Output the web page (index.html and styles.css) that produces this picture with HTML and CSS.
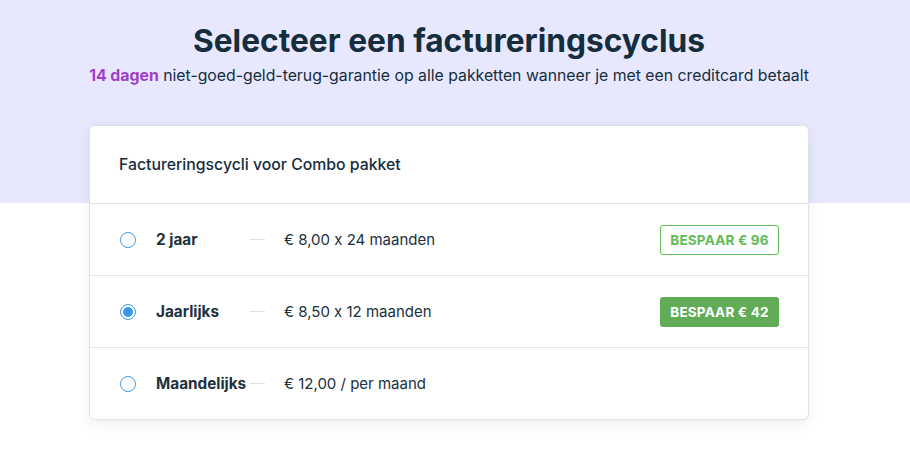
FILE: index.html
```html
<!DOCTYPE html>
<html lang="nl">
<head>
<meta charset="utf-8">
<link rel="stylesheet" href="styles.css">
</head>
<body>
<main class="page">
  <header class="hero">
    <h1 class="title">Selecteer een factureringscyclus</h1>
    <p class="subtitle"><span class="accent">14 dagen</span> niet-goed-geld-terug-garantie op alle pakketten wanneer je met een creditcard betaalt</p>
  </header>
  <section class="card">
    <div class="card-head">Factureringscycli voor Combo pakket</div>
    <div class="row">
      <span class="radio"></span>
      <span class="label">2 jaar</span>
      <span class="dash"></span>
      <span class="price">€ 8,00 x 24 maanden</span>
      <span class="badge badge-outline">BESPAAR € 96</span>
    </div>
    <div class="row">
      <span class="radio radio-on"></span>
      <span class="label">Jaarlijks</span>
      <span class="dash"></span>
      <span class="price">€ 8,50 x 12 maanden</span>
      <span class="badge badge-solid">BESPAAR € 42</span>
    </div>
    <div class="row">
      <span class="radio"></span>
      <span class="label">Maandelijks</span>
      <span class="dash"></span>
      <span class="price">€ 12,00 / per maand</span>
    </div>
  </section>
</main>
</body>
</html>
```
FILE: styles.css
```css
* { box-sizing: border-box; }
html, body { margin: 0; padding: 0; }
body {
  font-family: "Inter", "Noto Sans", sans-serif;
  font-feature-settings: "calt" 0;
  color: #162d3d;
  background: linear-gradient(to bottom, #e7e8fe 0, #e7e8fe 203px, #ffffff 203px);
  min-height: 452px;
}
.page {
  display: flex;
  flex-direction: column;
  align-items: center;
  padding-right: 12px;
}
.hero {
  display: flex;
  flex-direction: column;
  align-items: center;
  padding-top: 20px;
}
.title {
  margin: 0;
  font-size: 31.7px;
  font-weight: 700;
  line-height: 42px;
  color: #162d3d;
}
.subtitle {
  margin: 3px 0 0;
  font-size: 15.8px;
  line-height: 22px;
  color: #162d3d;
  white-space: nowrap;
}
.accent { color: #a040c8; font-weight: 700; }
.card {
  margin-top: 38px;
  width: 720px;
  background: #fff;
  border-radius: 6px;
  border: 1px solid #e0e2e8;
  box-shadow: 0 4px 12px rgba(22, 45, 61, 0.08);
  overflow: hidden;
}
.card-head {
  height: 78px;
  display: flex;
  align-items: center;
  padding-left: 29px;
  font-size: 15.8px;
  font-weight: 500;
  border-bottom: 1px solid #dfe1e6;
}
.row {
  height: 72px;
  display: flex;
  align-items: center;
  padding-left: 30px;
  padding-right: 29px;
  border-bottom: 1px solid #e4e5e9;
}
.row:last-child { border-bottom: none; height: 71px; }
.radio {
  width: 16px;
  height: 16px;
  border-radius: 50%;
  border: 1px solid #3899ec;
  flex: none;
  display: flex;
  align-items: center;
  justify-content: center;
}
.radio-on::after {
  content: "";
  width: 10px;
  height: 10px;
  border-radius: 50%;
  background: #3899ec;
}
.label {
  margin-left: 20px;
  width: 94px;
  font-size: 15.3px;
  font-weight: 700;
  color: #20303c;
  white-space: nowrap;
}
.dash {
  width: 15px;
  height: 1px;
  background: #dfe1e6;
  flex: none;
}
.price {
  margin-left: 19px;
  font-size: 15px;
  color: #20303c;
  flex: 1;
}
.badge {
  width: 119px;
  height: 30px;
  border-radius: 3px;
  display: flex;
  align-items: center;
  justify-content: center;
  font-size: 13.5px;
  font-weight: 700;
  letter-spacing: 0.2px;
}
.badge-outline { border: 1px solid #60bc57; color: #60bc57; }
.badge-solid { background: #60ac57; color: #fff; }
```
